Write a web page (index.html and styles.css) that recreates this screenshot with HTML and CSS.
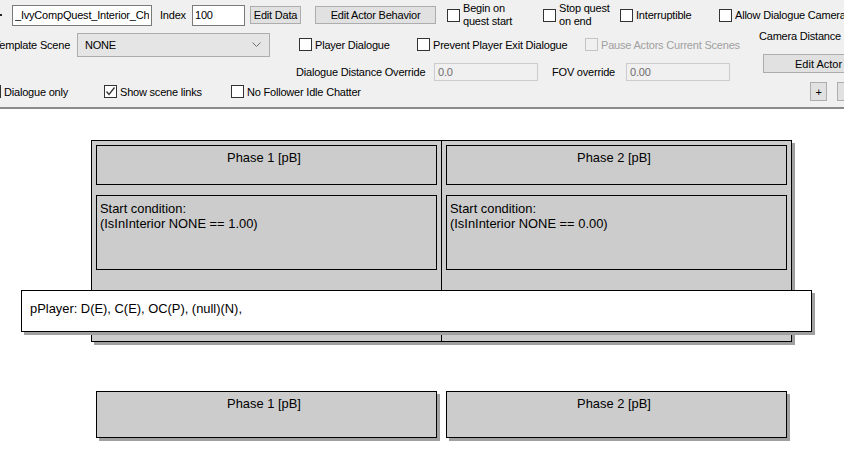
FILE: index.html
```html
<!DOCTYPE html>
<html>
<head>
<meta charset="utf-8">
<link rel="stylesheet" href="styles.css">
</head>
<body>
<div class="toolbar">
  <div class="row r1">
    <span class="stub"></span>
    <input class="field name" value="_IvyCompQuest_Interior_Chest">
    <span class="lbl w-index">Index</span>
    <input class="field idx" value="100">
    <button class="btn w-editdata">Edit Data</button>
    <button class="btn w-eab">Edit Actor Behavior</button>
    <div class="chk w-begin"><span class="box"></span><span class="txt two">Begin on<br>quest start</span></div>
    <div class="chk w-stop"><span class="box"></span><span class="txt two">Stop quest<br>on end</span></div>
    <div class="chk w-int"><span class="box"></span><span class="txt">Interruptible</span></div>
    <div class="chk w-allow"><span class="box"></span><span class="txt">Allow Dialogue Camera</span></div>
  </div>
  <div class="row r2">
    <span class="lbl tpl">Template Scene</span>
    <div class="select"><span>NONE</span><svg class="chev" width="9" height="5" viewBox="0 0 9 5"><polyline points="0.5,0.5 4.5,4.5 8.5,0.5" fill="none" stroke="#707070" stroke-width="1"/></svg></div>
    <div class="chk w-player"><span class="box"></span><span class="txt">Player Dialogue</span></div>
    <div class="chk w-prevent"><span class="box"></span><span class="txt">Prevent Player Exit Dialogue</span></div>
    <div class="chk w-pause disabled"><span class="box"></span><span class="txt">Pause Actors Current Scenes</span></div>
    <span class="lbl camdist">Camera Distance</span>
  </div>
  <div class="row r3">
    <span class="lbl ddo">Dialogue Distance Override</span>
    <div class="field-dis">0.0</div>
    <span class="lbl fov">FOV override</span>
    <div class="field-dis">0.00</div>
    <button class="btn edit-actor">Edit Actor</button>
  </div>
  <div class="row r4">
    <div class="chk w-dlgonly"><span class="box"></span><span class="txt">Dialogue only</span></div>
    <div class="chk w-links"><span class="box"><svg width="11" height="11" viewBox="0 0 11 11"><polyline points="1.5,5.5 4,8.5 9.5,1.5" fill="none" stroke="#333" stroke-width="1.3"/></svg></span><span class="txt">Show scene links</span></div>
    <div class="chk w-follow"><span class="box"></span><span class="txt">No Follower Idle Chatter</span></div>
    <button class="btn small">+</button>
    <button class="btn small next"></button>
  </div>
</div>
<div class="canvas">
  <div class="phase-group">
    <div class="phase-col">
      <div class="title-box">Phase 1 [pB]</div>
      <div class="cond-box">Start condition:<br>(IsInInterior NONE == 1.00)</div>
    </div>
    <div class="phase-col">
      <div class="title-box">Phase 2 [pB]</div>
      <div class="cond-box">Start condition:<br>(IsInInterior NONE == 0.00)</div>
    </div>
  </div>
  <div class="actors">pPlayer: D(E), C(E), OC(P), (null)(N),</div>
  <div class="phase-single p1">Phase 1 [pB]</div>
  <div class="phase-single p2">Phase 2 [pB]</div>
</div>
</body>
</html>
```
FILE: styles.css
```css
* { box-sizing: border-box; }
html, body { margin: 0; padding: 0; }
body {
  width: 844px;
  height: 459px;
  overflow: hidden;
  background: #fff;
  font-family: "Liberation Sans", Arial, sans-serif;
  color: #000;
}

/* ---------- toolbar ---------- */
.toolbar {
  height: 109px;
  background: #f0f0f0;
  border-bottom: 2px solid #8a8a8a;
  overflow: hidden;
  font-size: 11px;
  letter-spacing: -0.2px;
  white-space: nowrap;
}
.row { display: flex; align-items: center; }
.row > * { flex: none; }
.r1 { height: 30px; }
.r2 { height: 29px; }
.r3 { height: 26px; }
.r4 { height: 13px; }

.stub { width: 2px; height: 2px; background: #222; }

.field {
  height: 21px;
  border: 1px solid #7a7a7a;
  background: #fff;
  font: inherit;
  letter-spacing: inherit;
  color: #000;
  padding: 0 2px;
  margin: 0;
  outline: none;
}
.name { margin-left: 10px; width: 140px; }
.idx { width: 53px; }
.lbl { display: block; }
.w-index { margin-left: 8px; width: 32px; }

.btn {
  font: inherit;
  letter-spacing: inherit;
  color: #000;
  background: #e1e1e1;
  border: 1px solid #adadad;
  padding: 0;
  margin: 0;
  height: 18px;
  text-align: center;
}
.w-editdata { margin-left: 5px; width: 51px; }
.w-eab { margin-left: 14px; width: 121px; }

.chk { display: flex; align-items: center; }
.box {
  flex: none;
  width: 13px;
  height: 13px;
  border: 1px solid #333;
  background: #fff;
  display: flex;
  align-items: center;
  justify-content: center;
}
.txt { margin-left: 3px; }
.txt.two { line-height: 13px; }
.disabled .box { border-color: #c4c4c4; background: #f0f0f0; }
.disabled .txt { color: #a0a0a0; }

.w-begin { margin-left: 11px; width: 96px; }
.w-stop { width: 77px; }
.w-int { width: 99px; }

.tpl { margin-left: -6px; width: 83px; }
.select {
  width: 193px;
  height: 24px;
  background: #e5e5e5;
  border: 1px solid #adadad;
  display: flex;
  align-items: center;
  justify-content: space-between;
  padding: 0 8px 0 7px;
}
.w-player { margin-left: 29px; width: 118px; }
.w-prevent { width: 168px; }
.w-pause { width: 174px; }
.camdist { margin-bottom: 18px; }

.ddo { margin-left: 296px; width: 138px; }
.field-dis {
  width: 104px;
  height: 18px;
  border: 1px solid #cccccc;
  background: #f0f0f0;
  color: #6d6d6d;
  padding: 2px 3px 0;
}
.fov { margin-left: 14px; width: 74px; }
.edit-actor {
  margin-left: 33px;
  width: 160px;
  height: 19px;
  margin-bottom: 17px;
  text-align: left;
  padding-left: 31px;
  letter-spacing: 0;
}

.w-dlgonly { margin-left: -12px; width: 116px; }
.w-links { width: 127px; }
.w-follow { width: 579px; }
.small { width: 17px; height: 19px; }
.next { margin-left: 10px; width: 24px; }

/* ---------- canvas ---------- */
.canvas {
  position: relative;
  height: 350px;
  background: #fff;
}
.phase-group {
  position: absolute;
  left: 91px;
  top: 31px;
  width: 701px;
  height: 202px;
  border: 1px solid #000;
  background: #cccccc;
  box-shadow: 3px 3px 0 #a0a0a0;
  display: grid;
  grid-template-columns: 350px 349px;
}
.phase-col {
  display: flex;
  flex-direction: column;
  gap: 10px;
  padding: 4px;
}
.phase-col:first-child { border-right: 1px solid #000; padding-right: 4px; }
.title-box {
  height: 40px;
  border: 1px solid #000;
  text-align: center;
  font-size: 12.9px;
  line-height: 15px;
  padding: 4px 5px 0 0;
}
.cond-box {
  height: 75px;
  border: 1px solid #000;
  font-size: 12.9px;
  line-height: 15px;
  padding: 5px 3px;
}
.actors {
  position: absolute;
  left: 21px;
  top: 181px;
  width: 791px;
  height: 42px;
  background: #fff;
  border: 1px solid #000;
  box-shadow: 3px 3px 0 #a0a0a0;
  font-size: 12.9px;
  line-height: 15px;
  padding: 10px 8px;
}
.phase-single {
  position: absolute;
  top: 282px;
  width: 341px;
  height: 47px;
  border: 1px solid #000;
  background: #cccccc;
  box-shadow: 3px 3px 0 #a0a0a0;
  text-align: center;
  font-size: 12.9px;
  line-height: 15px;
  padding: 4px 5px 0 0;
}
.p1 { left: 96px; }
.p2 { left: 446px; }
```
